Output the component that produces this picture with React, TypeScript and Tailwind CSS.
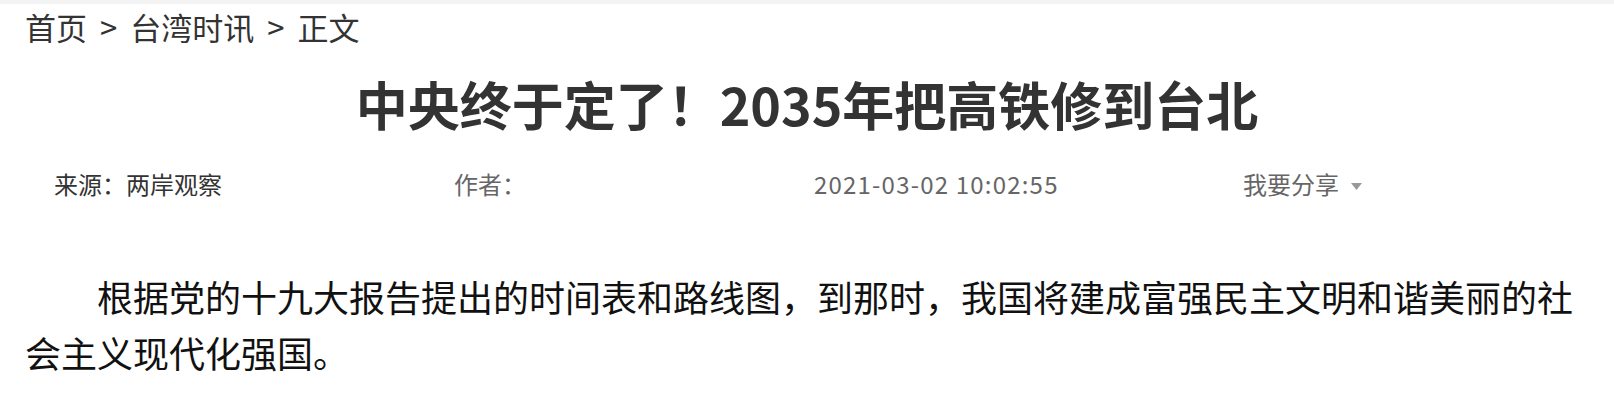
import React from "react"

const FONT = { fontFamily: '"Noto Sans CJK SC", "Noto Sans", sans-serif' }

const Sep = () => <span className="mx-[13px] text-[#333]">&gt;</span>

const App = () => {
  return (
    <div className="w-[1614px] min-h-[412px] bg-white" style={FONT}>
      <div className="h-[4px] bg-[#f3f3f3]" />
      <div className="mt-[8px] pl-[25px] text-[31px] leading-[30px] text-[#333]">
        首页<Sep />台湾时讯<Sep />正文
      </div>
      <h1 className="mt-[32px] text-center text-[52px] leading-[60px] font-bold text-[#333]">
        中央终于定了！2035年把高铁修到台北
      </h1>
      <div className="mt-[35px] flex items-center pl-[54px] text-[24px] leading-[30px]">
        <div className="w-[400px] text-[#333]">来源：两岸观察</div>
        <div className="w-[360px] text-[#666]">作者：</div>
        <div className="w-[429px] text-[#666] tracking-[1.2px]">2021-03-02 10:02:55</div>
        <div className="flex items-center gap-[12px] text-[#666]">
          <span>我要分享</span>
          <svg width="11" height="7" viewBox="0 0 11 7" className="mt-[5px]">
            <path d="M0 0 H11 L5.5 7 Z" fill="#999" />
          </svg>
        </div>
      </div>
      <p className="mt-[69px] px-[25px] text-[36px] leading-[56px] text-[#111] indent-[2em]">
        根据党的十九大报告提出的时间表和路线图，到那时，我国将建成富强民主文明和谐美丽的社会主义现代化强国。
      </p>
    </div>
  )
}

export default App
